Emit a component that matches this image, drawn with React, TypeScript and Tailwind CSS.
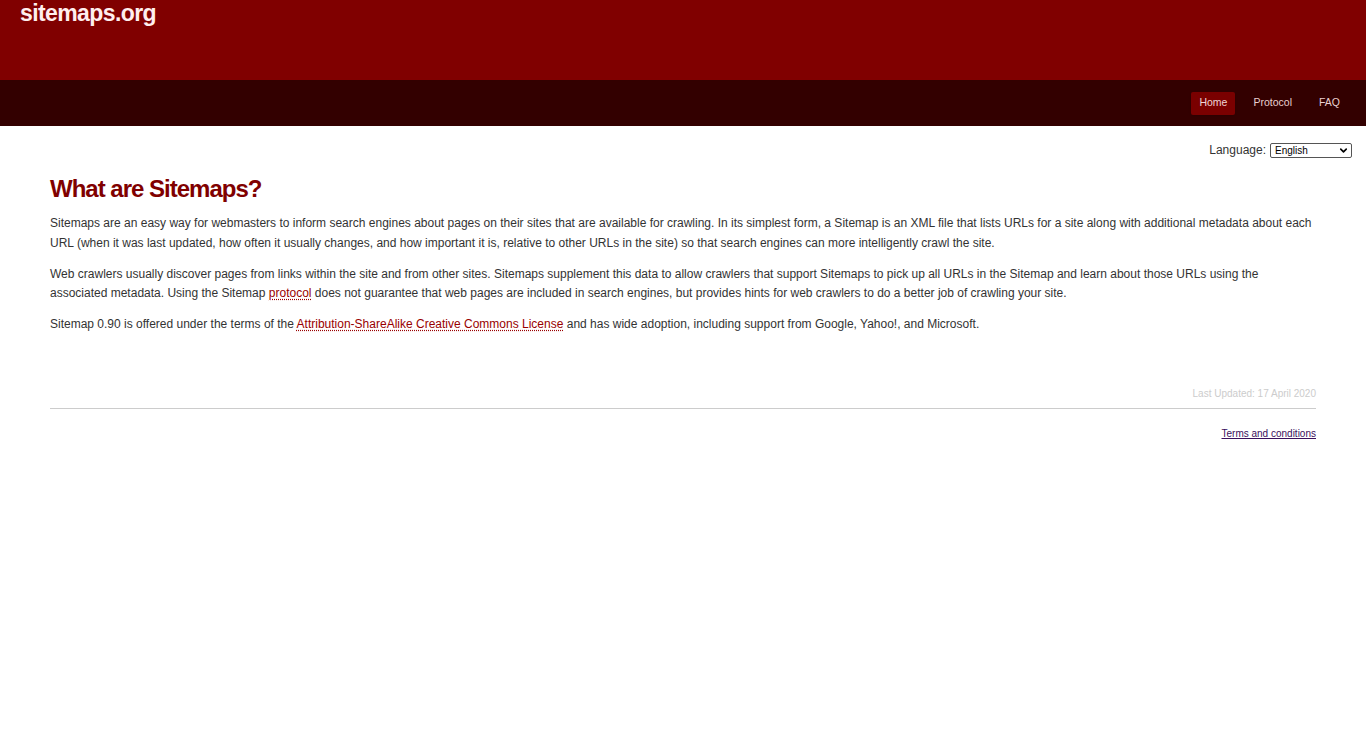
import { ChevronDown } from "lucide-react";

const font = { fontFamily: '"Liberation Sans", Arial, sans-serif' };

function Header() {
  return (
    <header>
      {/* Banner */}
      <div className="h-[80px] bg-[#800000] px-5 flex flex-col">
        <h1 className="text-[23px] font-bold leading-[28px] tracking-[-0.6px] text-[#ffeeee] -mt-[1px]">
          sitemaps.org
        </h1>
      </div>

      {/* Nav */}
      <nav className="h-[46px] bg-[#330000] flex items-center justify-end pr-[26px]">
        <a className="h-[23px] w-[44px] -ml-[1px] flex items-center justify-center rounded-[2px] bg-[#7a0000] text-[10.5px] text-[#f0d6d6] shadow-sm">
          Home
        </a>
        <a className="ml-[18px] text-[10.5px] text-[#e8cfcf]">Protocol</a>
        <a className="ml-[27px] text-[10.5px] text-[#e8cfcf]">FAQ</a>
      </nav>
    </header>
  );
}

function LanguagePicker() {
  return (
    <div className="flex justify-end items-center pr-[14px] pt-[15px] text-[12px] text-[#333]">
      <span className="mr-[4px]">Language:</span>
      <div className="relative w-[82px] h-[15px] border border-[#555] rounded-[2px] bg-white flex items-center pl-[4px] text-[10px] text-black">
        English
        <ChevronDown size={11} strokeWidth={3.5} className="absolute right-[2px] top-[1px] text-black" />
      </div>
    </div>
  );
}

function Link({ children }: { children: React.ReactNode }) {
  return (
    <a className="text-[#990000] underline decoration-dotted decoration-[#990000] underline-offset-2">
      {children}
    </a>
  );
}

export default function App() {
  return (
    <div className="min-h-screen bg-white" style={font}>
      <Header />
      <LanguagePicker />

      <main className="mx-[50px] mt-[16px]">
        <h2 className="text-[24px] font-bold tracking-[-1px] leading-[28px] text-[#800000] mb-[11px]">
          What are Sitemaps?
        </h2>

        <div className="text-[12px] leading-[19.5px] text-[#333] flex flex-col gap-[11.5px]">
          <p>
            Sitemaps are an easy way for webmasters to inform search engines about pages on their sites that are
            available for crawling. In its simplest form, a Sitemap is an XML file that lists URLs for a site along
            with additional metadata about each URL (when it was last updated, how often it usually changes, and how
            important it is, relative to other URLs in the site) so that search engines can more intelligently crawl
            the site.
          </p>
          <p>
            Web crawlers usually discover pages from links within the site and from other sites. Sitemaps supplement
            this data to allow crawlers that support Sitemaps to pick up all URLs in the Sitemap and learn about those
            URLs using the associated metadata. Using the Sitemap <Link>protocol</Link> does not guarantee that web
            pages are included in search engines, but provides hints for web crawlers to do a better job of crawling
            your site.
          </p>
          <p>
            Sitemap 0.90 is offered under the terms of the <Link>Attribution-ShareAlike Creative Commons License</Link>{" "}
            and has wide adoption, including support from Google, Yahoo!, and Microsoft.
          </p>
        </div>

        <footer className="mt-[52px]">
          <p className="text-right text-[10px] text-[#cccccc] leading-[14px]">Last Updated: 17 April 2020</p>
          <hr className="mt-[7px] border-t border-[#cccccc]" />
          <p className="text-right text-[10px] leading-[14px] mt-[18px]">
            <a className="text-[#3a0f5c] underline">Terms and conditions</a>
          </p>
        </footer>
      </main>
    </div>
  );
}
